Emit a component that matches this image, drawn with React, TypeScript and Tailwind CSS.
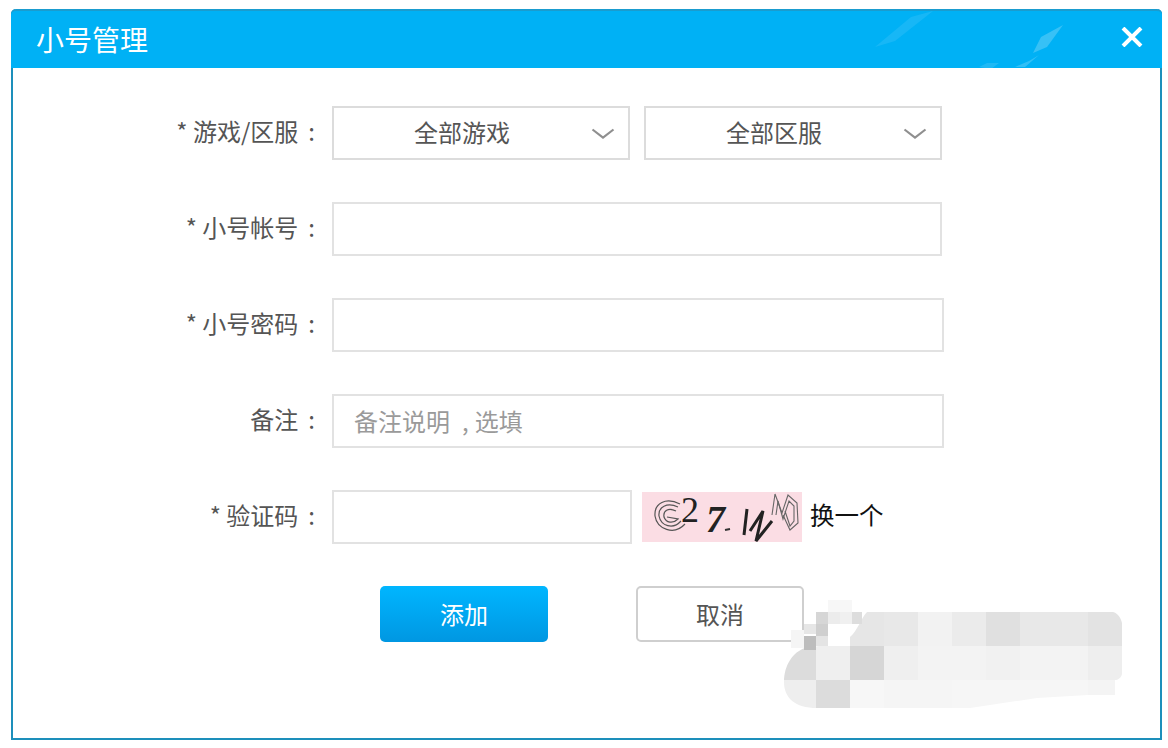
const fontStack = "font-['Microsoft_YaHei','Noto_Sans_CJK_SC',sans-serif]";

function Chevron() {
  return (
    <svg width="24" height="12" viewBox="0 0 24 12" className="absolute right-[13px] top-[20px]" aria-hidden>
      <path d="M1.5 1.5 L12 9.5 L22.5 1.5" fill="none" stroke="#8f8f8f" strokeWidth="2.2" />
    </svg>
  );
}

function SelectBox({ label, width }: { label: string; width: string }) {
  return (
    <div className={`relative flex h-[54px] items-center border-2 border-[#dcdcdc] pb-[2px] pl-[80px] text-[24px] text-[#555] ${width}`}>
      {label}
      <Chevron />
    </div>
  );
}

function Row({ label, children }: { label: string; children: React.ReactNode }) {
  return (
    <div className="flex h-[54px] items-center">
      <div className="w-[332px] whitespace-nowrap pb-[4px] pr-[17px] text-right text-[24px] text-[#555]">
        {label}
        <span className="ml-[10px]">:</span>
      </div>
      {children}
    </div>
  );
}

function Captcha() {
  return (
    <svg width="160" height="52" viewBox="0 0 160 52" className="ml-[10px] shrink-0" aria-hidden>
      <rect x="0" y="1" width="160" height="50" fill="#fbdde4" />
      <g fill="none" stroke="#555" strokeWidth="1.2">
        <path d="M38 13 C24 6 12 12 13 25 C15 38 32 45 43 33" />
        <path d="M36 16 C25 11 16 16 17 25 C19 35 31 39 39 30" />
        <path d="M34 20 C26 16 21 20 22 26 C24 32 31 33 36 28 L25 26" />
      </g>
      <text x="39" y="31" fontFamily="Liberation Serif, serif" fontSize="36" fill="#222">2</text>
      <text x="64" y="41" fontFamily="Liberation Serif, serif" fontSize="38" fontWeight="700" fontStyle="italic" fill="#222">7</text>
      <path d="M83 39 L88 38" stroke="#333" strokeWidth="2" />
      <path d="M105 18 L102 44 M108 40 L121 20 L114 50 L130 30" fill="none" stroke="#222" strokeWidth="3" />
      <g fill="none" stroke="#666" strokeWidth="1.1">
        <path d="M130 24 L133 3 L140 22 L146 4 L155 12 L156 32 L148 39 L141 24" />
        <path d="M134 24 L136 10 L141 28 L147 10 L152 15 L152 30 L148 35 L143 20" />
      </g>
    </svg>
  );
}

// the smudge somebody painted over the corner of the screenshot
function Smudge() {
  const top = ['#e6e6e6', '#e8e8e8', '#f2f2f2', '#ebebeb', '#e0e0e0', '#e8e8e8', '#e8e8e8', '#e3e3e3'];
  const mid = ['#efefef', '#d6d6d6', '#efefef', '#f3f3f3', '#f3f3f3', '#f1f1f1', '#f3f3f3', '#f3f3f3', '#eeeeee'];
  const bottom = ['#dcdcdc', '#f7f7f7', '#f5f5f5', '#f5f5f5', '#f6f6f6', '#f6f6f6', '#f6f6f6', '#f6f6f6', '#f4f4f4'];
  return (
    <svg width="355" height="125" viewBox="0 0 355 125" className="absolute left-[773px] top-[590px]" aria-hidden>
      <defs>
        <clipPath id="smudge">
          <path d="M11 92 C11 75 20 62 32 58 L60 54 L77 47 C85 40 88 28 94 22 L340 22 C348 24 352 36 349 50 L349 84 C348 88 345 90 342 90 L342 105 L315 105 L264 108 L197 118 L44 118 C22 118 11 108 11 92 Z" />
        </clipPath>
      </defs>
      <g clipPath="url(#smudge)">
        {top.map((c, i) => (
          <rect key={i} x={77 + i * 34} y="22" width="34" height="34" fill={c} />
        ))}
        <rect x="0" y="56" width="43" height="34" fill="#dcdcdc" />
        {mid.map((c, i) => (
          <rect key={i} x={43 + i * 34} y="56" width="34" height="34" fill={c} />
        ))}
        <rect x="0" y="90" width="43" height="30" fill="#eeeeee" />
        {bottom.map((c, i) => (
          <rect key={i} x={43 + i * 34} y="90" width="34" height="30" fill={c} />
        ))}
      </g>
      <rect x="55" y="10" width="24" height="12" fill="#f7f7f7" />
      <rect x="43" y="22" width="12" height="12" fill="#d6d6d6" />
      <rect x="55" y="22" width="12" height="12" fill="#ececec" />
      <rect x="67" y="22" width="12" height="12" fill="#f0f0f0" />
      <rect x="79" y="22" width="10" height="12" fill="#dddddd" />
      <rect x="31" y="34" width="12" height="10" fill="#e6e6e6" />
      <rect x="43" y="34" width="12" height="12" fill="#cfcfcf" />
      <rect x="31" y="46" width="12" height="14" fill="#bdbdbd" />
      <rect x="43" y="46" width="12" height="10" fill="#e4e4e4" />
      <rect x="18" y="40" width="13" height="18" fill="#f5f5f5" />
    </svg>
  );
}

export default function App() {
  return (
    <div className={`relative h-[748px] w-[1168px] overflow-hidden bg-white pl-[11px] pt-[9px] ${fontStack}`}>
      <div className="flex h-[731px] w-[1151px] flex-col rounded-t-[5px] border-2 border-t-0 border-[#1d8fbb] bg-white">
        <div className="relative -mx-[2px] flex h-[59px] shrink-0 items-center overflow-hidden rounded-t-[5px] border-t-2 border-[#1a9ccf] bg-[#00b1f5] pb-[2px] pl-[25px] text-[28px] text-white">
          小号管理
          <svg width="1151" height="59" viewBox="0 0 1151 59" className="absolute left-0 top-0" aria-hidden>
            <path d="M864 36 L900 6 L922 0 L884 30 Z" fill="#4cc6f7" opacity="0.3" />
            <path d="M1022 42 L1030 26 L1052 14 L1036 36 Z" fill="#7ad4f8" opacity="0.45" />
            <path d="M1004 56 L1018 50 L1028 44 L1014 56 Z" fill="#7ad4f8" opacity="0.4" />
            <path d="M968 56 L976 52 L988 52 L980 58 Z" fill="#7ad4f8" opacity="0.25" />
          </svg>
          <svg width="22" height="20" viewBox="0 0 22 20" className="absolute left-[1110px] top-[16px]" aria-hidden>
            <path d="M2 1 L20 19 M20 1 L2 19" stroke="#fff" strokeWidth="4" />
          </svg>
        </div>

        <div className="-ml-[13px] flex flex-col gap-[42px] pt-[38px]">
          <Row label="* 游戏/区服">
            <div className="flex gap-[14px]">
              <SelectBox label="全部游戏" width="w-[298px]" />
              <SelectBox label="全部区服" width="w-[298px]" />
            </div>
          </Row>
          <Row label="* 小号帐号">
            <input className="h-[54px] w-[610px] border-2 border-[#e2e2e2] bg-white outline-none" />
          </Row>
          <Row label="* 小号密码">
            <input className="h-[54px] w-[612px] border-2 border-[#e2e2e2] bg-white outline-none" />
          </Row>
          <Row label="备注">
            <input
              placeholder={'备注说明\u2002,\u2005选填'}
              className="h-[54px] w-[612px] border-2 border-[#e2e2e2] bg-white pb-[2px] pl-[20px] text-[24px] outline-none placeholder:text-[#9a9a9a]"
            />
          </Row>
          <Row label="* 验证码">
            <input className="h-[54px] w-[300px] border-2 border-[#e2e2e2] bg-white outline-none" />
            <Captcha />
            <span className="ml-[8px] whitespace-nowrap pb-[4px] text-[24.5px] text-[#111]">换一个</span>
          </Row>
          <div className="flex gap-[88px] pl-[380px]">
            <button className="h-[56px] w-[168px] rounded-[5px] bg-gradient-to-b from-[#00b6ff] to-[#0097e2] text-[24px] text-white">
              添加
            </button>
            <button className="h-[56px] w-[168px] rounded-[5px] border-2 border-[#cfcfcf] bg-white text-[24px] text-[#555]">
              取消
            </button>
          </div>
        </div>
      </div>
      <Smudge />
    </div>
  );
}
